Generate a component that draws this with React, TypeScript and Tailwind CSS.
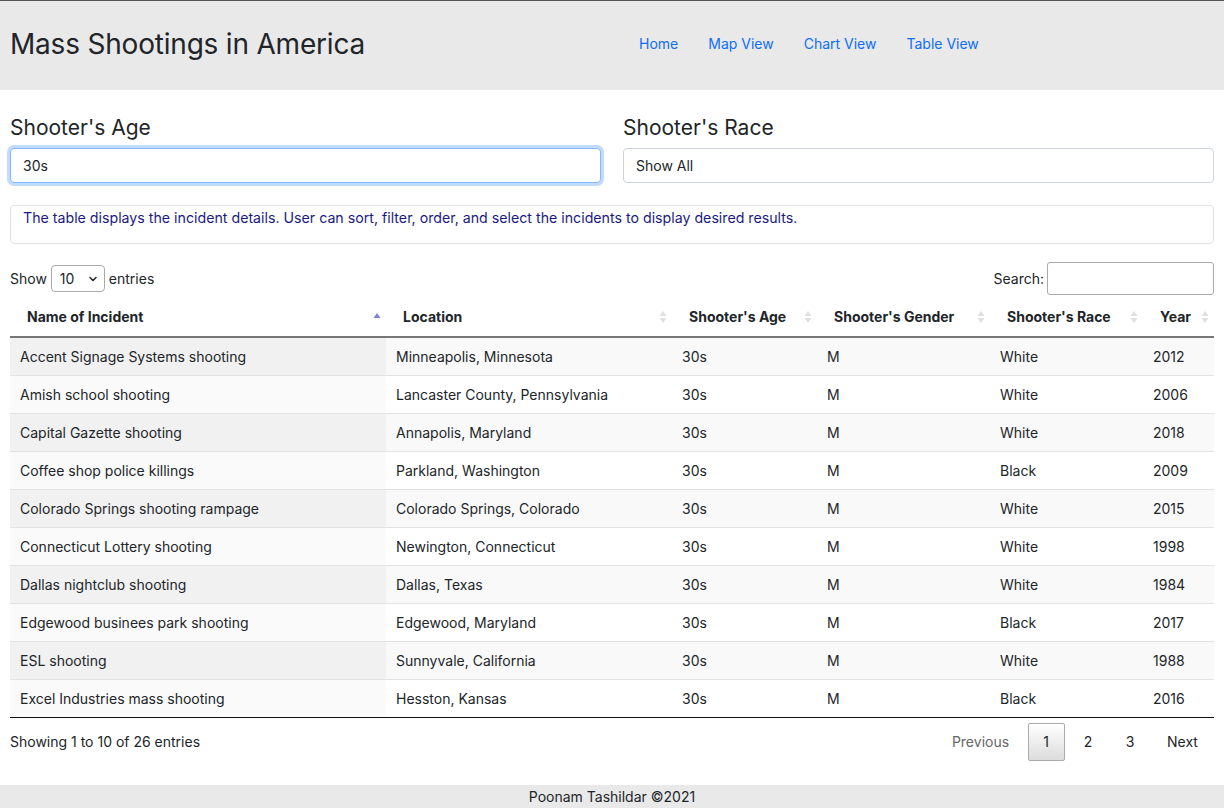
import { ChevronDown } from 'lucide-react'

const rows = [
	['Accent Signage Systems shooting', 'Minneapolis, Minnesota', '30s', 'M', 'White', '2012'],
	['Amish school shooting', 'Lancaster County, Pennsylvania', '30s', 'M', 'White', '2006'],
	['Capital Gazette shooting', 'Annapolis, Maryland', '30s', 'M', 'White', '2018'],
	['Coffee shop police killings', 'Parkland, Washington', '30s', 'M', 'Black', '2009'],
	['Colorado Springs shooting rampage', 'Colorado Springs, Colorado', '30s', 'M', 'White', '2015'],
	['Connecticut Lottery shooting', 'Newington, Connecticut', '30s', 'M', 'White', '1998'],
	['Dallas nightclub shooting', 'Dallas, Texas', '30s', 'M', 'White', '1984'],
	['Edgewood businees park shooting', 'Edgewood, Maryland', '30s', 'M', 'Black', '2017'],
	['ESL shooting', 'Sunnyvale, California', '30s', 'M', 'White', '1988'],
	['Excel Industries mass shooting', 'Hesston, Kansas', '30s', 'M', 'Black', '2016'],
]

const columns = [
	{ name: 'Name of Incident', width: 'w-[376px]', active: true },
	{ name: 'Location', width: 'w-[286px]' },
	{ name: "Shooter's Age", width: 'w-[145px]' },
	{ name: "Shooter's Gender", width: 'w-[173px]' },
	{ name: "Shooter's Race", width: 'w-[153px]' },
	{ name: 'Year', width: 'w-[71px]' },
]

function SortIcon({ active }: { active?: boolean }) {
	if (active) {
		return (
			<svg width="8" height="12" viewBox="0 0 8 12" className="absolute right-[5px] top-[14px]">
				<path d="M4 1 L7.5 6 L0.5 6 Z" fill="#7f7fe0" />
			</svg>
		)
	}
	return (
		<svg width="8" height="14" viewBox="0 0 8 14" className="absolute right-[5px] top-[12px]">
			<path d="M4 1 L7.5 6 L0.5 6 Z" fill="#e0e0e0" />
			<path d="M4 13 L7.5 8 L0.5 8 Z" fill="#e0e0e0" />
		</svg>
	)
}

export default function App() {
	return (
		<div className="min-h-[808px] flex flex-col font-['Inter',sans-serif] text-[#212529]">
			<header className="border-t border-[#555] bg-[#e9e9e9] h-[90px] flex items-center px-[10px] pb-[4px]">
				<h1 className="text-[28px] tracking-[-0.2px] w-[614px]">Mass Shootings in America</h1>
				<nav className="flex text-[14px] text-[#0d6efd]">
					<a className="px-[15px]">Home</a>
					<a className="px-[15px]">Map View</a>
					<a className="px-[15px]">Chart View</a>
					<a className="px-[15px]">Table View</a>
				</nav>
			</header>

			<main className="flex-1 px-[10px]">
				<div className="grid grid-cols-2 gap-[22px] mt-[25px]">
					<div>
						<label className="block text-[21px] leading-[26px] mb-[7px]">Shooter's Age</label>
						<div className="h-[35px] rounded-[4px] border border-[#86b7fe] shadow-[0_0_0_3px_rgba(13,110,253,0.25)] bg-white flex items-center justify-between px-[12px] text-[14px]">
							<span>30s</span>
						</div>
					</div>
					<div>
						<label className="block text-[21px] leading-[26px] mb-[7px]">Shooter's Race</label>
						<div className="h-[35px] rounded-[4px] border border-[#ced4da] bg-white flex items-center px-[12px] text-[14px]">
							<span>Show All</span>
						</div>
					</div>
				</div>

				<div className="mt-[22px] h-[39px] border border-[#dee2e6] rounded-[4px] px-[12px] pt-[1px] text-[14.2px] text-[#1a1a80]">
					The table displays the incident details. User can sort, filter, order, and select the incidents to display desired results.
				</div>

				<div className="flex items-center justify-between mt-[18px] text-[14px]">
					<div className="flex items-center gap-[4px]">
						<span>Show</span>
						<div className="w-[54px] h-[27px] border border-[#aaa] rounded-[4px] flex items-center justify-between pl-[8px] pr-[5px] text-[14px]">
							<span>10</span>
							<ChevronDown className="w-[12px] h-[12px]" strokeWidth={3} />
						</div>
						<span>entries</span>
					</div>
					<div className="flex items-center gap-[3px]">
						<span>Search:</span>
						<div className="w-[167px] h-[33px] border border-[#aaa] rounded-[3px] bg-white" />
					</div>
				</div>

				<table className="w-full mt-[3px] border-collapse text-[14px] table-fixed">
					<thead>
						<tr className="border-b-2 border-[#777]">
							{columns.map((c) => (
								<th
									key={c.name}
									className={`${c.width} relative text-left font-bold h-[39px] pl-[17px] pr-[18px] pb-[2px]`}
								>
									{c.name}
									<SortIcon active={c.active} />
								</th>
							))}
						</tr>
					</thead>
					<tbody>
						{rows.map((r, i) => (
							<tr
								key={r[0]}
								className={`h-[38px] ${i % 2 === 0 ? 'bg-[#f9f9f9]' : 'bg-white'} ${
									i === rows.length - 1 ? 'border-b border-[#111]' : 'border-b border-[#e3e3e3]'
								}`}
							>
								{r.map((v, j) => (
									<td
										key={j}
										className={`pl-[10px] pr-[8px] ${
											j === 0 ? (i % 2 === 0 ? 'bg-[#f1f1f1]' : 'bg-[#fafafa]') : ''
										}`}
									>
										{v}
									</td>
								))}
							</tr>
						))}
					</tbody>
				</table>

				<div className="flex items-center justify-between mt-[5px] text-[14px]">
					<span>Showing 1 to 10 of 26 entries</span>
					<div className="flex items-center">
						<span className="w-[89px] text-center text-[#666]">Previous</span>
						<span className="w-[42px] flex justify-center">
							<span className="w-[37px] h-[38px] flex items-center justify-center border border-[#aaa] rounded-[2px] bg-gradient-to-b from-white to-[#dcdcdc]">
								1
							</span>
						</span>
						<span className="w-[42px] text-center">2</span>
						<span className="w-[42px] text-center">3</span>
						<span className="w-[63px] text-center">Next</span>
					</div>
				</div>
			</main>

			<footer className="h-[23px] bg-[#e9e9e9] text-center text-[14px] leading-[24px]">
				Poonam Tashildar ©2021
			</footer>
		</div>
	)
}
